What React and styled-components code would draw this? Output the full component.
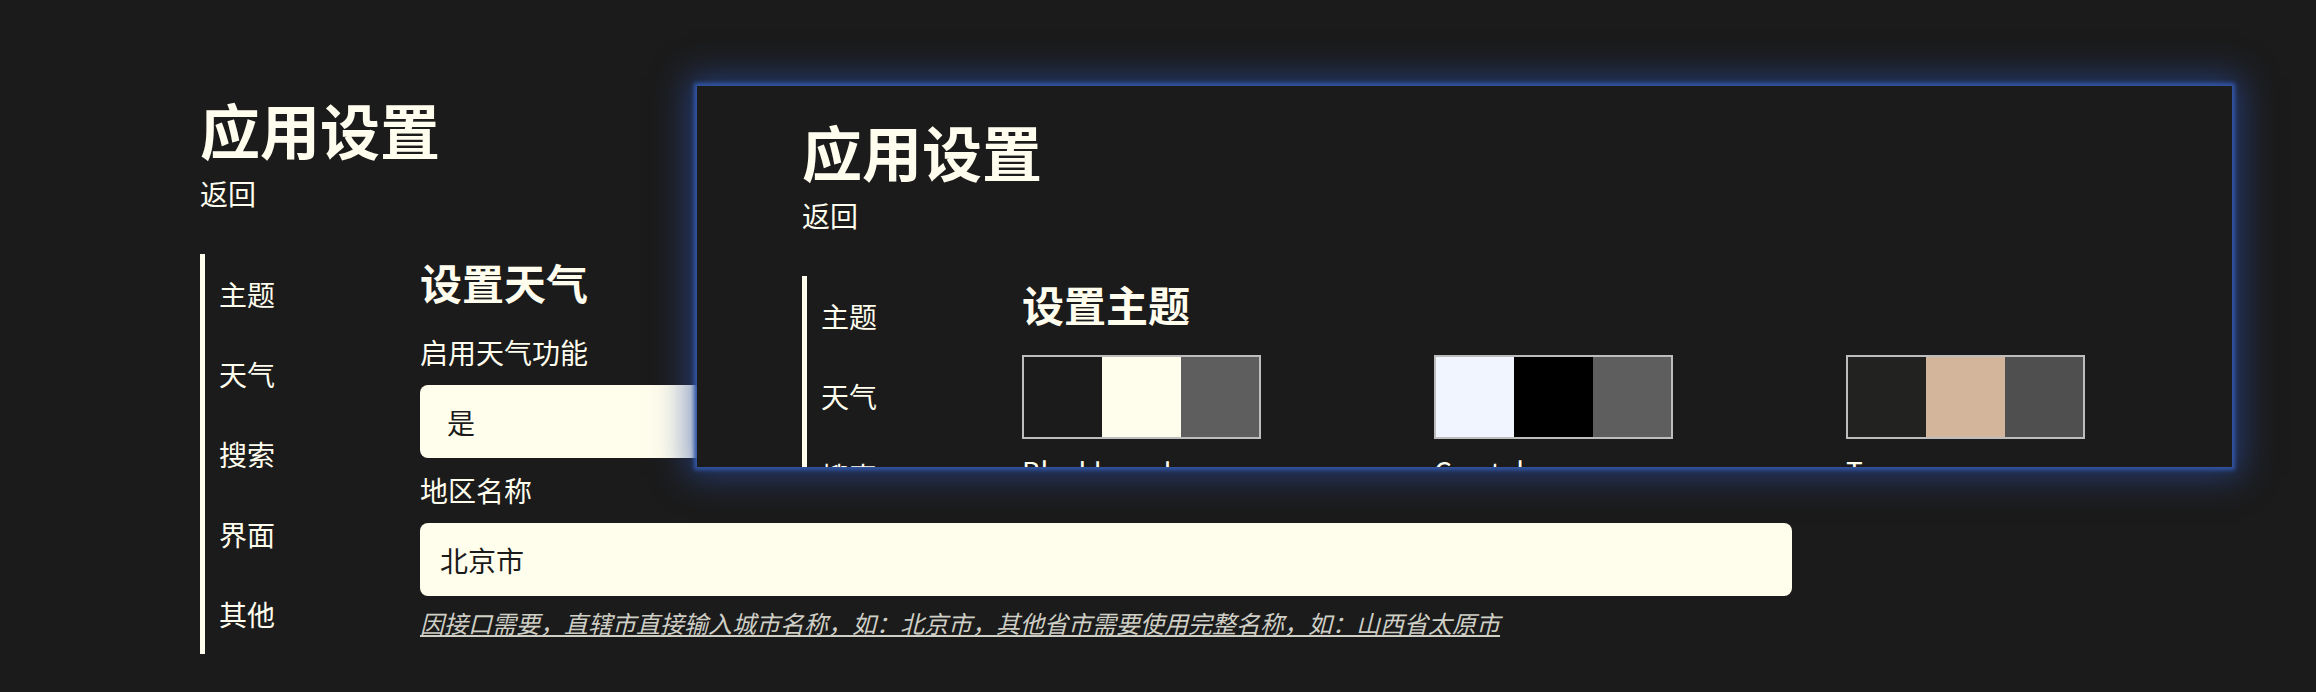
import styled, { createGlobalStyle } from "styled-components"

const GlobalStyle = createGlobalStyle`
  html, body {
    margin: 0;
    padding: 0;
    background: #1b1b1b;
  }
  body {
    font-family: "Noto Sans CJK SC", "Noto Sans", sans-serif;
    color: #fffdee;
    overflow: hidden;
  }
`

const Screen = styled.div`
  position: relative;
  width: 2316px;
  height: 692px;
  overflow: hidden;
`

const Page = styled.div`
  display: flex;
  flex-direction: column;
  padding: ${(p) => p.$top}px 0 0 ${(p) => p.$left}px;
`

const Title = styled.h1`
  margin: 0;
  font-size: 60px;
  line-height: 60px;
  font-weight: 700;
`

const Back = styled.a`
  margin-top: 20px;
  font-size: 28px;
  line-height: 28px;
  cursor: pointer;
`

const Body = styled.div`
  display: flex;
  margin-top: 47px;
`

const Sidebar = styled.nav`
  width: 220px;
  flex-shrink: 0;
`

const Menu = styled.ul`
  margin: 0;
  padding: 0;
  list-style: none;
  border-left: 5px solid #fffdee;
  width: fit-content;
`

const MenuItem = styled.li`
  height: 80px;
  display: flex;
  align-items: center;
  padding-left: 14px;
  padding-right: 20px;
  font-size: 28px;
  line-height: 28px;
`

const Content = styled.section`
  display: flex;
  flex-direction: column;
  width: 1372px;
  flex-shrink: 0;
`

const Heading = styled.h2`
  margin: 7px 0 0;
  font-size: 42px;
  line-height: 42px;
  font-weight: 700;
`

const Label = styled.label`
  margin-top: ${(p) => p.$gap}px;
  font-size: 28px;
  line-height: 28px;
`

const fieldBase = `
  box-sizing: border-box;
  width: 100%;
  height: 73px;
  margin-top: 19px;
  border: none;
  border-radius: 8px;
  background: #fffdec;
  color: #1b1b1b;
  font-family: "Noto Sans CJK SC", "Noto Sans", sans-serif;
  font-size: 28px;
  outline: none;
`

const Select = styled.select`
  ${fieldBase}
  appearance: none;
  padding-left: 27px;
`

const Input = styled.input`
  ${fieldBase}
  padding-left: 20px;
`

const Note = styled.p`
  margin: 15px 0 0;
  font-size: 24px;
  line-height: 24px;
  font-style: italic;
  text-decoration: underline;
  color: #cfcfc6;
`

const Preview = styled.div`
  position: absolute;
  left: 697px;
  top: 86px;
  width: 1535px;
  height: 381px;
  overflow: hidden;
  background: #1b1b1b;
  box-shadow: 0 0 4px 3px #3256a6, 0 0 32px 10px rgba(45, 80, 168, 0.6);
`

const ThemeGrid = styled.div`
  display: grid;
  grid-template-columns: repeat(3, 412px);
  margin-top: 30px;
`

const ThemeOption = styled.div`
  display: flex;
  flex-direction: column;
  gap: 18px;
`

const Swatch = styled.div`
  display: flex;
  box-sizing: border-box;
  width: 239px;
  height: 84px;
  border: 2px solid #bdbdbd;
`

const SwatchBlock = styled.span`
  flex: 1;
  background: ${(p) => p.$color};
`

const ThemeName = styled.span`
  font-size: 28px;
  line-height: 28px;
`

const menu = ["主题", "天气", "搜索", "界面", "其他"]

const themes = [
  { name: "Blackboard", colors: ["#1b1b1b", "#fffdec", "#5e5e5e"] },
  { name: "Crystal", colors: ["#f0f5ff", "#000000", "#5e5e5e"] },
  { name: "Tea", colors: ["#222220", "#d3b59c", "#4f4f4f"] },
]

const Shell = ({ top, left, children }) => (
  <Page $top={top} $left={left}>
    <Title>应用设置</Title>
    <Back>返回</Back>
    <Body>
      <Sidebar>
        <Menu>
          {menu.map((m) => (
            <MenuItem key={m}>{m}</MenuItem>
          ))}
        </Menu>
      </Sidebar>
      <Content>{children}</Content>
    </Body>
  </Page>
)

export default function App() {
  return (
    <Screen>
      <GlobalStyle />
      <Shell top={99} left={200}>
        <Heading>设置天气</Heading>
        <Label $gap={35}>启用天气功能</Label>
        <Select defaultValue="yes">
          <option value="yes">是</option>
          <option value="no">否</option>
        </Select>
        <Label $gap={18}>地区名称</Label>
        <Input defaultValue="北京市" />
        <Note>因接口需要，直辖市直接输入城市名称，如：北京市，其他省市需要使用完整名称，如：山西省太原市</Note>
      </Shell>

      <Preview>
        <Shell top={35} left={105}>
          <Heading>设置主题</Heading>
          <ThemeGrid>
            {themes.map((t) => (
              <ThemeOption key={t.name}>
                <Swatch>
                  {t.colors.map((c, i) => (
                    <SwatchBlock key={i} $color={c} />
                  ))}
                </Swatch>
                <ThemeName>{t.name}</ThemeName>
              </ThemeOption>
            ))}
          </ThemeGrid>
        </Shell>
      </Preview>
    </Screen>
  )
}
